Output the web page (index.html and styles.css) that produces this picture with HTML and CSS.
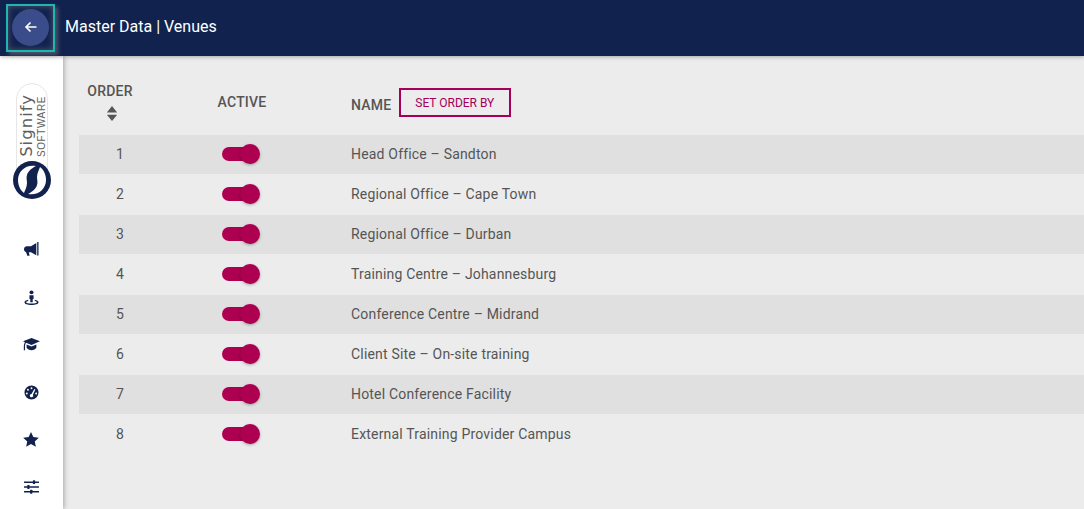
FILE: index.html
```html
<!DOCTYPE html>
<html lang="en">
<head>
    <meta charset="UTF-8">
    <title>Master Data | Venues</title>
    <link rel="stylesheet" href="styles.css">
</head>
<body>
    <header class="topbar">
        <div class="back-focus">
            <button class="back-btn" aria-label="Back">
                <svg width="14" height="14" viewBox="0 0 14 14" fill="none" stroke="#fff" stroke-width="1.6"><path d="M12.5 7H2M6.5 2.5 2 7l4.500 4.500"/></svg>
            </button>
        </div>
        <h1 class="page-title">Master Data | Venues</h1>
    </header>

    <div class="layout">
        <!-- Sidebar -->
        <nav class="sidebar">
            <div class="logo">
                <div class="logo-pill">
                    <span class="logo-name">Signify</span>
                    <span class="logo-soft">SOFTWARE</span>
                </div>
                <svg class="logo-mark" width="38" height="38" viewBox="0 0 38 38">
                    <circle cx="19" cy="19" r="19" fill="#12224f"/>
                    <path d="M23 5C13 3 5 10 5 19c0 5 2 10 6 13 1-3 3-6 3-10 0-3-1-5 0-8 1-4 5-7 9-9z" fill="#fff"/>
                    <path d="M15 33c10 2 18-5 18-14 0-5-2-10-6-13-1 3-3 6-3 10 0 3 1 5 0 8-1 4-5 7-9 9z" fill="#fff"/>
                </svg>
            </div>
            <ul class="nav-icons">
                <li><svg width="15" height="15" viewBox="0 0 15 15"><path d="M14.500 0h-1.300v13.500h1.300z"/><path d="M12.300 1 7 4.300H3C1.300 4.300 0 5.600 0 7.200c0 1.300.8 2.400 2 2.800l1.300 3.800h2.300L4.800 10.200H7l5.300 3z"/></svg></li>
                <li><svg width="15" height="15" viewBox="0 0 16 16"><circle cx="8" cy="2.500" r="2.100"/><path d="M5.800 5.500h4.400v4.200H9.300V13H6.700V9.700h-.9z"/><path d="M4.500 10.300v1.300C3 12 2.200 12.500 2.200 13c0 .8 2.500 1.400 5.800 1.400s5.800-.6 5.800-1.400c0-.5-.8-1-2.300-1.400v-1.300C14 10.800 15.500 11.800 15.500 13c0 1.800-3.300 3-7.500 3S.5 14.800.5 13c0-1.200 1.500-2.200 4-2.700z"/></svg></li>
                <li><svg width="17" height="15" viewBox="0 0 18 16"><path d="M9 1 0 4.600l2 .9C1 7 .8 9 .8 10.500V14h1.300v-3.500c0-1.800.3-3.400 1.100-4.500L9 8.500l9-3.900z"/><path d="M3.800 8v3.500C4.800 13.300 6.700 14 9 14s4.200-.7 5.200-2.500V8L9 10.200z"/></svg></li>
                <li><svg width="15" height="15" viewBox="0 0 16 16"><path fill-rule="evenodd" d="M8 .5a7.500 7.500 0 1 1 0 15 7.500 7.500 0 0 1 0-15zM8 2.400a1 1 0 1 0 0 2 1 1 0 0 0 0-2zM4.200 4a1 1 0 1 0 0 2 1 1 0 0 0 0-2zM11 4.200 8 9.500a1.800 1.800 0 1 0 1.500.8l2.600-5.400zM3 8a1 1 0 1 0 0 2 1 1 0 0 0 0-2zM13 8a1 1 0 1 0 0 2 1 1 0 0 0 0-2z"/></svg></li>
                <li><svg width="16" height="15" viewBox="0 0 17 16"><path d="m8.500 0 2.500 5.300 5.800.7-4.300 4 1.200 5.800-5.200-2.900-5.200 2.900L4.500 10 .2 6 6 5.300z"/></svg></li>
                <li><svg width="15" height="14" viewBox="0 0 16 15"><path d="M0 1.500h16v1.600H0zM0 6.700h16v1.600H0zM0 11.900h16v1.500H0z"/><rect x="9.500" y=".2" width="2.400" height="4.200" rx=".5"/><rect x="3.500" y="5.400" width="2.400" height="4.200" rx=".5"/><rect x="6.500" y="10.500" width="2.400" height="4.200" rx=".5"/></svg></li>
            </ul>
        </nav>

        <main class="content">
            <div class="table-head">
                <div class="col-order">
                    <span>ORDER</span>
                    <svg class="sort-icon" width="12" height="15" viewBox="0 0 12 16"><path d="M6 0l5.500 6.800H.5zM6 16 .5 9.200h11z"/></svg>
                </div>
                <div class="col-active">ACTIVE</div>
                <div class="col-name">
                    <span class="name-label">NAME</span>
                    <button class="order-btn">SET ORDER BY</button>
                </div>
            </div>

            <div class="row">
                <div class="cell-order">1</div>
                <div class="cell-active"><span class="toggle"></span></div>
                <div class="cell-name">Head Office – Sandton</div>
            </div>
            <div class="row">
                <div class="cell-order">2</div>
                <div class="cell-active"><span class="toggle"></span></div>
                <div class="cell-name">Regional Office – Cape Town</div>
            </div>
            <div class="row">
                <div class="cell-order">3</div>
                <div class="cell-active"><span class="toggle"></span></div>
                <div class="cell-name">Regional Office – Durban</div>
            </div>
            <div class="row">
                <div class="cell-order">4</div>
                <div class="cell-active"><span class="toggle"></span></div>
                <div class="cell-name">Training Centre – Johannesburg</div>
            </div>
            <div class="row">
                <div class="cell-order">5</div>
                <div class="cell-active"><span class="toggle"></span></div>
                <div class="cell-name">Conference Centre – Midrand</div>
            </div>
            <div class="row">
                <div class="cell-order">6</div>
                <div class="cell-active"><span class="toggle"></span></div>
                <div class="cell-name">Client Site – On-site training</div>
            </div>
            <div class="row">
                <div class="cell-order">7</div>
                <div class="cell-active"><span class="toggle"></span></div>
                <div class="cell-name">Hotel Conference Facility</div>
            </div>
            <div class="row">
                <div class="cell-order">8</div>
                <div class="cell-active"><span class="toggle"></span></div>
                <div class="cell-name">External Training Provider Campus</div>
            </div>
        </main>
    </div>
</body>
</html>
```

FILE: styles.css
```css
* {
    box-sizing: border-box;
}
html, body {
    height: 100%;
}
body {
    margin: 0;
    font-family: Roboto, 'Liberation Sans', sans-serif;
    font-size: 14px;
    color: #555;
    background: #ececec;
    overflow: hidden;
}
.topbar {
    height: 56px;
    background: #12224f;
    display: flex;
    align-items: center;
    padding-left: 6px;
    box-shadow: 0 1px 4px rgba(0, 0, 0, 0.3);
    position: relative;
    z-index: 2;
}
.back-focus {
    width: 49px;
    height: 48px;
    margin-top: -1px;
    border: 2px solid #1fb6b0;
    display: flex;
    align-items: center;
    justify-content: center;
    box-shadow: 3px 3px 4px rgba(125, 125, 125, 0.55), inset 0 0 6px rgba(125, 125, 125, 0.6);
}
.back-btn {
    width: 37px;
    height: 37px;
    padding: 0;
    margin-bottom: 1px;
    border: none;
    border-radius: 50%;
    background: #3a4c8a;
    display: flex;
    align-items: center;
    justify-content: center;
}
.page-title {
    margin: -3px 0 0 10px;
    font-size: 16px;
    font-weight: 400;
    color: #fff;
}
.layout {
    display: flex;
    height: calc(100% - 56px);
}
.sidebar {
    width: 63px;
    flex-shrink: 0;
    background: #fff;
    box-shadow: 1px 0 5px rgba(0, 0, 0, 0.3);
    display: flex;
    flex-direction: column;
    align-items: center;
    position: relative;
    z-index: 1;
}
.logo {
    margin-top: 27px;
    height: 116px;
    display: flex;
    flex-direction: column;
    align-items: center;
}
.logo-pill {
    width: 32px;
    height: 90px;
    border: 1px solid #e6e6e6;
    border-radius: 16px 16px 0 0;
    display: flex;
    align-items: flex-end;
    gap: 1px;
    padding: 0 0 15px 1px;
}
.logo-name {
    writing-mode: vertical-rl;
    transform: rotate(180deg);
    font-family: 'DejaVu Sans', sans-serif;
    font-size: 16.500px;
    line-height: 18px;
    color: #5f5f5f;
    letter-spacing: 1px;
}
.logo-soft {
    writing-mode: vertical-rl;
    transform: rotate(180deg);
    font-family: 'Liberation Sans', sans-serif;
    font-size: 10px;
    line-height: 9px;
    color: #5f5f5f;
    letter-spacing: 0.6px;
}
.logo-mark {
    margin-top: -12px;
}
.nav-icons {
    list-style: none;
    margin: 40px 0 0 -1px;
    padding: 0;
    display: flex;
    flex-direction: column;
    gap: 26px;
}
.nav-icons li {
    height: 21.500px;
    display: flex;
    align-items: center;
    justify-content: center;
}
.nav-icons svg {
    fill: #12224f;
}
.content {
    flex: 1;
    padding-left: 16px;
}
.table-head {
    height: 79px;
    display: grid;
    grid-template-columns: 82px 162px 1fr;
    font-weight: 500;
    letter-spacing: 0.2px;
}
.col-order {
    display: flex;
    flex-direction: column;
    align-items: center;
    padding: 27px 20px 0 0;
    line-height: 16px;
}
.sort-icon {
    fill: #555;
    margin-top: 7px;
    margin-left: 4px;
}
.col-active {
    text-align: center;
    padding-top: 38px;
    line-height: 16px;
}
.col-name {
    display: flex;
    align-items: flex-start;
    padding-left: 28px;
}
.name-label {
    margin-top: 41px;
    line-height: 16px;
}
.order-btn {
    margin: 32px 0 0 7.500px;
    width: 112px;
    height: 29px;
    background: transparent;
    border: 2px solid #a4005a;
    color: #a4005a;
    font-family: inherit;
    font-size: 12px;
    font-weight: 400;
    padding: 0;
}
.row {
    height: 39px;
    margin-bottom: 1px;
    padding-bottom: 1px;
    display: grid;
    grid-template-columns: 82px 162px 1fr;
    align-items: center;
}
.row:nth-child(even) {
    background: #e0e0e0;
}
.cell-order {
    text-align: center;
}
.cell-active {
    display: flex;
    justify-content: center;
    padding-right: 3px;
}
.cell-name {
    padding-left: 28px;
    letter-spacing: 0.185px;
}
.toggle {
    display: block;
    width: 37px;
    height: 14px;
    border-radius: 7px;
    background: #ad0050;
    position: relative;
}
.toggle::after {
    content: "";
    position: absolute;
    right: -1px;
    top: -3px;
    width: 20px;
    height: 20px;
    border-radius: 50%;
    background: #ad0050;
    box-shadow: 0 1px 3px rgba(0, 0, 0, 0.3);
}
```
